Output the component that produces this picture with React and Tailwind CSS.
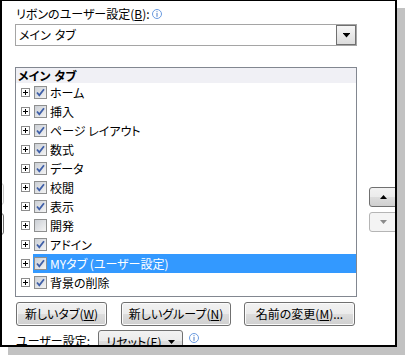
import React from 'react';

const Gap = () => <span className="inline-block w-[4px]" />;

const rows = [
  { label: 'ホーム', checked: true },
  { label: '挿入', checked: true },
  { label: 'ページ レイアウト', checked: true },
  { label: '数式', checked: true },
  { label: 'データ', checked: true },
  { label: '校閲', checked: true },
  { label: '表示', checked: true },
  { label: '開発', checked: false },
  { label: 'アドイン', checked: true },
  { label: 'MYタブ (ユーザー設定)', checked: true, selected: true },
  { label: '背景の削除', checked: true },
];

const InfoIcon = () => (
  <svg width="10" height="10" viewBox="0 0 10 10" className="shrink-0">
    <circle cx="5" cy="5" r="4.5" fill="#fff" stroke="#6a9be0" strokeWidth="1" />
    <rect x="4.5" y="2.2" width="1" height="1" fill="#4a7cc8" />
    <rect x="4.5" y="4" width="1" height="3.8" fill="#4a7cc8" />
  </svg>
);

const PlusBox = () => (
  <svg width="9" height="9" viewBox="0 0 9 9" className="shrink-0">
    <rect x="0.5" y="0.5" width="8" height="8" fill="#fff" stroke="#8c8c8c" />
    <path d="M2 4.5h5M4.5 2v5" stroke="#000" strokeWidth="1" />
  </svg>
);

const CheckBox = ({ checked }) => (
  <div className="w-[13px] h-[13px] shrink-0 border border-[#8e8f8f] bg-[linear-gradient(135deg,#cbcfd5,#f4f4f4)] flex items-center justify-center">
    {checked && (
      <svg width="11" height="11" viewBox="0 0 11 11">
        <path d="M2 5.5 L4.3 8.3 L9 2.2" fill="none" stroke="#3f5fa8" strokeWidth="1.8" />
      </svg>
    )}
  </div>
);

const Btn = ({ w, children }) => (
  <div
    className={`${w} h-[24px] shrink-0 rounded-[3px] border border-[#707070] shadow-[inset_0_0_0_1px_#fbfbfb] bg-[linear-gradient(#f2f2f2_0%,#ebebeb_50%,#dddddd_50%,#cfcfcf_100%)] flex items-center justify-center text-[12px] text-black`}
  >
    {children}
  </div>
);

const App = () => {
  return (
    <div className="w-[405px] h-[355px] bg-white font-['Noto_Sans_CJK_JP',sans-serif] [font-feature-settings:'palt'] text-[12px] leading-none text-black">
      <div className="w-[397px] h-[347px] border-l-2 border-r-2 border-b-2 border-t border-black shadow-[8px_8px_0_#c2c2c2] overflow-hidden flex items-start bg-white">
        {/* clipped left-panel buttons */}
        <div className="w-[13px] shrink-0 flex flex-col overflow-hidden">
          <div className="mt-[182px] -ml-[18px] w-[20px] h-[22px] shrink-0 rounded-[3px] border border-[#c8c8c8]" />
          <div className="mt-[8px] -ml-[18px] w-[20px] h-[22px] shrink-0 rounded-[3px] border border-[#707070]" />
        </div>

        {/* main column */}
        <div className="w-[342px] shrink-0 flex flex-col">
          <div className="mt-[5px] h-[16px] shrink-0 pl-[1px] flex items-center gap-[2px]">
            <span>
              リボンのユーザー設定(<span className="underline">B</span>):
            </span>
            <InfoIcon />
          </div>

          <div className="mt-[2px] h-[22px] shrink-0 border border-[#a5a5a5] flex items-center">
            <span className="pl-[3px] flex-1">
              メイン<Gap />タブ
            </span>
            <div className="w-[20px] h-[20px] border border-[#707070] bg-[linear-gradient(#f6f6f6,#dcdcdc)] flex items-center justify-center">
              <svg width="7" height="5" viewBox="0 0 7 5">
                <path d="M0 0h7v1H0z M0.5 1h6L3.5 4.5z" fill="#000" />
              </svg>
            </div>
          </div>

          <div className="mt-[21px] h-[230px] shrink-0 border border-[#828790] flex flex-col">
            <div className="h-[15px] shrink-0 bg-[#f0f0f5] flex items-center pl-[2px] font-bold">
              メイン<Gap />タブ
            </div>
            {rows.map((r) => (
              <div key={r.label} className="h-[19px] shrink-0 flex items-center">
                <div className="pl-[5px] w-[17px] flex items-center">
                  <PlusBox />
                </div>
                <div
                  className={`h-[19px] flex-1 flex items-center pl-[1px] ${
                    r.selected ? 'bg-[#3399ff] text-white' : ''
                  }`}
                >
                  <CheckBox checked={r.checked} />
                  <span className="ml-[3px] whitespace-pre">{r.label}</span>
                </div>
              </div>
            ))}
          </div>

          <div className="mt-[5px] shrink-0 flex items-center pl-[1px]">
            <Btn w="w-[91px]">
              新しいタブ(<span className="underline">W</span>)
            </Btn>
            <div className="w-[14px]" />
            <Btn w="w-[110px]">
              新しいグループ(<span className="underline">N</span>)
            </Btn>
            <div className="w-[13px]" />
            <Btn w="w-[111px]">
              名前の変更(<span className="underline">M</span>)...
            </Btn>
          </div>

          <div className="mt-[4px] shrink-0 flex items-start pl-[1px]">
            <span className="w-[82px] shrink-0 mt-[5px]">ユーザー設定:</span>
            <div className="w-[85px] h-[23px] shrink-0 rounded-[3px] border border-[#707070] bg-[linear-gradient(#f2f2f2_0%,#ebebeb_50%,#dddddd_50%,#cfcfcf_100%)] flex items-start pt-[5px] justify-center gap-[6px]">
              <span>
                リセット(<span className="underline">E</span>)
              </span>
              <svg width="7" height="4" viewBox="0 0 7 4" className="mt-[4px]">
                <path d="M0 0h7L3.5 4z" fill="#000" />
              </svg>
            </div>
            <div className="ml-[6px] mt-[3px]">
              <InfoIcon />
            </div>
          </div>
        </div>

        {/* right column: move up / down */}
        <div className="flex-1 flex flex-col pl-[12px] overflow-hidden">
          <div className="mt-[186px] w-[32px] h-[20px] shrink-0 rounded-[3px] border border-[#707070] bg-[linear-gradient(#f2f2f2_0%,#ebebeb_50%,#dddddd_50%,#cfcfcf_100%)] flex items-center pl-[10px]">
            <svg width="7" height="4" viewBox="0 0 7 4">
              <path d="M0 4h7L3.5 0z" fill="#000" />
            </svg>
          </div>
          <div className="mt-[5px] w-[32px] h-[20px] shrink-0 rounded-[3px] border border-[#b5b5b5] bg-[#f4f4f4] flex items-center pl-[10px]">
            <svg width="7" height="4" viewBox="0 0 7 4">
              <path d="M0 0h7L3.5 4z" fill="#8a8a8a" />
            </svg>
          </div>
        </div>
      </div>
    </div>
  );
};

export default App;
